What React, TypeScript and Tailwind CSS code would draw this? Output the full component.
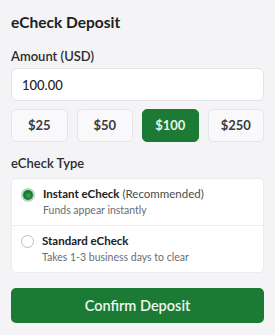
import React, { useState } from "react"

const presets = [25, 50, 100, 250]

const options = [
  { id: "instant", title: "Instant eCheck", note: "(Recommended)", desc: "Funds appear instantly" },
  { id: "standard", title: "Standard eCheck", note: "", desc: "Takes 1-3 business days to clear" },
]

export default function App() {
  const [amount, setAmount] = useState("100.00")
  const [type, setType] = useState("instant")

  return (
    <div className="min-h-[335px] w-[275px] bg-[#f4f4f6] px-[11px] pt-[12px] font-['Lato',sans-serif] text-[#1f2023]">
      <h1 className="text-[15.5px] font-bold leading-[20px]">eCheck Deposit</h1>

      <label className="mt-4 block text-[13px] font-semibold leading-[16px] text-[#2b2c30]">Amount (USD)</label>
      <input
        value={amount}
        onChange={(e) => setAmount(e.target.value)}
        className="mt-1 block h-[33px] w-full rounded-[6px] border border-[#e3e4e8] bg-white px-[10px] text-[13px] font-medium text-[#222] outline-none"
      />

      <div className="mt-2 grid grid-cols-4 gap-[9px]">
        {presets.map((p) => {
          const active = `${p}.00` === amount
          return (
            <button
              key={p}
              onClick={() => setAmount(`${p}.00`)}
              className={
                active
                  ? "h-[33px] rounded-[5px] border border-[#1b7a34] bg-[#1b7a34] text-[13px] font-bold text-[#e8f3ea]"
                  : "h-[33px] rounded-[5px] border border-[#e4e5e9] bg-[#f9f9fb] text-[13px] font-bold text-[#3a3b40]"
              }
            >
              ${p}
            </button>
          )
        })}
      </div>

      <p className="mt-[13px] text-[13px] font-semibold leading-[16px] text-[#2b2c30]">eCheck Type</p>

      <div className="mt-[7px] divide-y divide-[#ececef] rounded-[5px] border border-[#ececef] bg-white">
        {options.map((o) => {
          const on = type === o.id
          return (
            <div
              key={o.id}
              onClick={() => setType(o.id)}
              className="flex cursor-pointer items-start gap-[8px] px-[9px] pb-[7px] pt-[7px]"
            >
              {on ? (
                <span className="mt-[2px] flex h-[14px] w-[14px] shrink-0 items-center justify-center rounded-full bg-[#b5dbbf]">
                  <span className="flex h-[10px] w-[10px] items-center justify-center rounded-full bg-[#1d7a35]">
                    <span className="h-[5px] w-[5px] rounded-full bg-[#3a9650]" />
                  </span>
                </span>
              ) : (
                <span className="mt-[2px] h-[13px] w-[13px] shrink-0 rounded-full border border-[#bdbec3] bg-white" />
              )}
              <div>
                <p className="text-[11.5px] leading-[16px] text-[#202124]">
                  <span className="font-bold">{o.title}</span>
                  {o.note && <span className="text-[#4a4b50]"> {o.note}</span>}
                </p>
                <p className="mt-[1px] text-[10.5px] leading-[15px] text-[#6b6c72]">{o.desc}</p>
              </div>
            </div>
          )
        })}
      </div>

      <button className="mt-[15px] h-[35px] w-full rounded-[5px] bg-[#1b7a34] text-[14.5px] font-semibold text-[#eef6ef]">
        Confirm Deposit
      </button>
    </div>
  )
}
